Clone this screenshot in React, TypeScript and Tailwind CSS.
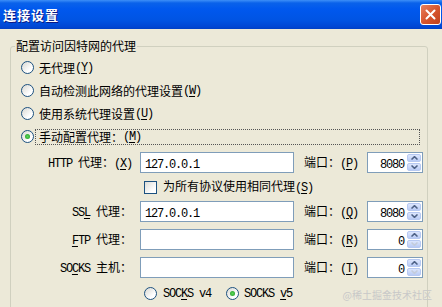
import type { ReactNode } from "react";

// half-width ascii like SimSun 12px (6px per char)
function A({ children }: { children: ReactNode }) {
  return (
    <span className="font-['Liberation_Mono',monospace] text-[12px] tracking-[-1.2px]">
      {children}
    </span>
  );
}

function Key({ k }: { k: string }) {
  return (
    <A>
      (<u className="underline-offset-2">{k}</u>)
    </A>
  );
}

function Radio({ checked }: { checked?: boolean }) {
  return (
    <span className="flex h-[13px] w-[13px] shrink-0 items-center justify-center rounded-full border border-[#1C5180] bg-[linear-gradient(135deg,#D8D8D2,#FFFFFF_70%)]">
      {checked && (
        <span className="h-[5px] w-[5px] rounded-full bg-[radial-gradient(circle,#5CD65C,#1F9A1F)]" />
      )}
    </span>
  );
}

function Checkbox() {
  return (
    <span className="block h-[13px] w-[13px] shrink-0 border border-[#1C5180] bg-[linear-gradient(135deg,#DCDCD7,#FFFFFF_75%)]" />
  );
}

function Chevron({ up, dim }: { up?: boolean; dim?: boolean }) {
  return (
    <svg width="7" height="4" viewBox="0 0 7 4">
      <path
        d={up ? "M0.5 3.5 L3.5 0.6 L6.5 3.5" : "M0.5 0.5 L3.5 3.4 L6.5 0.5"}
        fill="none"
        stroke={dim ? "#C4CCDA" : "#4D6185"}
        strokeWidth="1.5"
      />
    </svg>
  );
}

function Spin({ value, dimDown }: { value: string; dimDown?: boolean }) {
  return (
    <div className="flex h-[21px] w-[56px] shrink-0 border border-[#7F9DB9] bg-white p-px">
      <span className="flex-1 pr-[3px] text-right leading-[17px]">
        <A>{value}</A>
      </span>
      <div className="flex w-[14px] flex-col gap-px">
        <span className="flex flex-1 items-center justify-center rounded-[2px] border border-[#B7C9F2] bg-[linear-gradient(#DCE6FD,#B9CBF5)]">
          <Chevron up />
        </span>
        <span className="flex flex-1 items-center justify-center rounded-[2px] border border-[#B7C9F2] bg-[linear-gradient(#DCE6FD,#B9CBF5)]">
          <Chevron dim={dimDown} />
        </span>
      </div>
    </div>
  );
}

function Field({
  label,
  value,
  port,
  portKey,
  dimDown,
  className = "",
}: {
  label: ReactNode;
  value?: string;
  port: string;
  portKey: string;
  dimDown?: boolean;
  className?: string;
}) {
  return (
    <div className={`flex h-[21px] items-center ${className}`}>
      <span className="w-[121px] whitespace-nowrap text-right">{label}</span>
      <div className="ml-[8px] h-[21px] w-[154px] border border-[#7F9DB9] bg-white pl-[4px] leading-[19px]">
        {value && <A>{value}</A>}
      </div>
      <span className="ml-[10px] w-[63px] whitespace-nowrap">
        端口：<Key k={portKey} />
      </span>
      <Spin value={port} dimDown={dimDown} />
    </div>
  );
}

function RadioRow({
  children,
  checked,
}: {
  children: ReactNode;
  checked?: boolean;
}) {
  return (
    <div className="flex h-[23px] items-center pl-[10px]">
      <Radio checked={checked} />
      <span
        className={`ml-[1px] mr-[7px] flex h-[16px] flex-1 items-center whitespace-nowrap border pl-[3px] ${
          checked ? "border-dotted border-[#555]" : "border-transparent"
        }`}
      >
        {children}
      </span>
    </div>
  );
}

export default function App() {
  return (
    <div className="relative h-[307px] w-[442px] overflow-hidden bg-[#ECE9D8] font-['Noto_Sans_CJK_SC',sans-serif] text-[12px] leading-[14px] text-black">
      <div className="flex h-[29px] items-center justify-between bg-[linear-gradient(#3D8FF8_0px,#0A62EA_3px,#0058EE_9px,#0054E3_20px,#0046D3_27px,#0040C4_29px)] pl-[3px] pr-px">
        <span className="text-[13px] font-bold tracking-[1px] text-white [text-shadow:1px_1px_#0A1883]">
          连接设置
        </span>
        <span className="flex h-[21px] w-[21px] items-center justify-center rounded-[3px] border border-white bg-[linear-gradient(135deg,#E8805E,#D5532C_55%,#C0401C)]">
          <svg width="11" height="11" viewBox="0 0 11 11">
            <path d="M1.5 1.5 L9.5 9.5 M9.5 1.5 L1.5 9.5" stroke="white" strokeWidth="2" strokeLinecap="round" />
          </svg>
        </span>
      </div>

      <div className="px-[10px] pt-[10px]">
        <fieldset className="h-[300px] w-[418px] rounded-[3px] border border-[#D0D0BF] p-0">
          <legend className="ml-[4px] px-px leading-[14px]">配置访问因特网的代理</legend>

          <div className="mt-[3px]">
            <RadioRow>
              无代理<Key k="Y" />
            </RadioRow>
            <RadioRow>
              自动检测此网络的代理设置<Key k="W" />
            </RadioRow>
            <RadioRow>
              使用系统代理设置<Key k="U" />
            </RadioRow>
            <RadioRow checked>
              手动配置代理：<Key k="M" />
            </RadioRow>
          </div>

          <Field
            className="mt-[4px]"
            label={
              <>
                <A>HTTP </A>代理：<Key k="X" />
              </>
            }
            value="127.0.0.1"
            port="8080"
            portKey="P"
          />

          <div className="flex h-[28px] items-center pl-[133px]">
            <Checkbox />
            <span className="ml-[6px]">
              为所有协议使用相同代理<Key k="S" />
            </span>
          </div>

          <Field
            label={
              <>
                <A>
                  SS<u className="underline-offset-2">L</u>{" "}
                </A>
                代理：
              </>
            }
            value="127.0.0.1"
            port="8080"
            portKey="Q"
          />
          <Field
            className="mt-[7px]"
            label={
              <>
                <A>
                  <u className="underline-offset-2">F</u>TP{" "}
                </A>
                代理：
              </>
            }
            port="0"
            portKey="R"
            dimDown
          />
          <Field
            className="mt-[7px]"
            label={
              <>
                <A>
                  SO<u className="underline-offset-2">C</u>KS{" "}
                </A>
                主机：
              </>
            }
            port="0"
            portKey="T"
            dimDown
          />

          <div className="flex h-[30px] items-center pl-[133px]">
            <Radio />
            <span className="ml-[6px]">
              <A>
                SOC<u className="underline-offset-2">K</u>S v4
              </A>
            </span>
            <span className="ml-[15px]">
              <Radio checked />
            </span>
            <span className="ml-[5px]">
              <A>
                SOCKS <u className="underline-offset-2">v</u>5
              </A>
            </span>
          </div>
        </fieldset>
      </div>

      <span className="absolute bottom-[6px] right-[10px] text-[10px] leading-[12px] text-[#C8C8C8]">
        @稀土掘金技术社区
      </span>
    </div>
  );
}
